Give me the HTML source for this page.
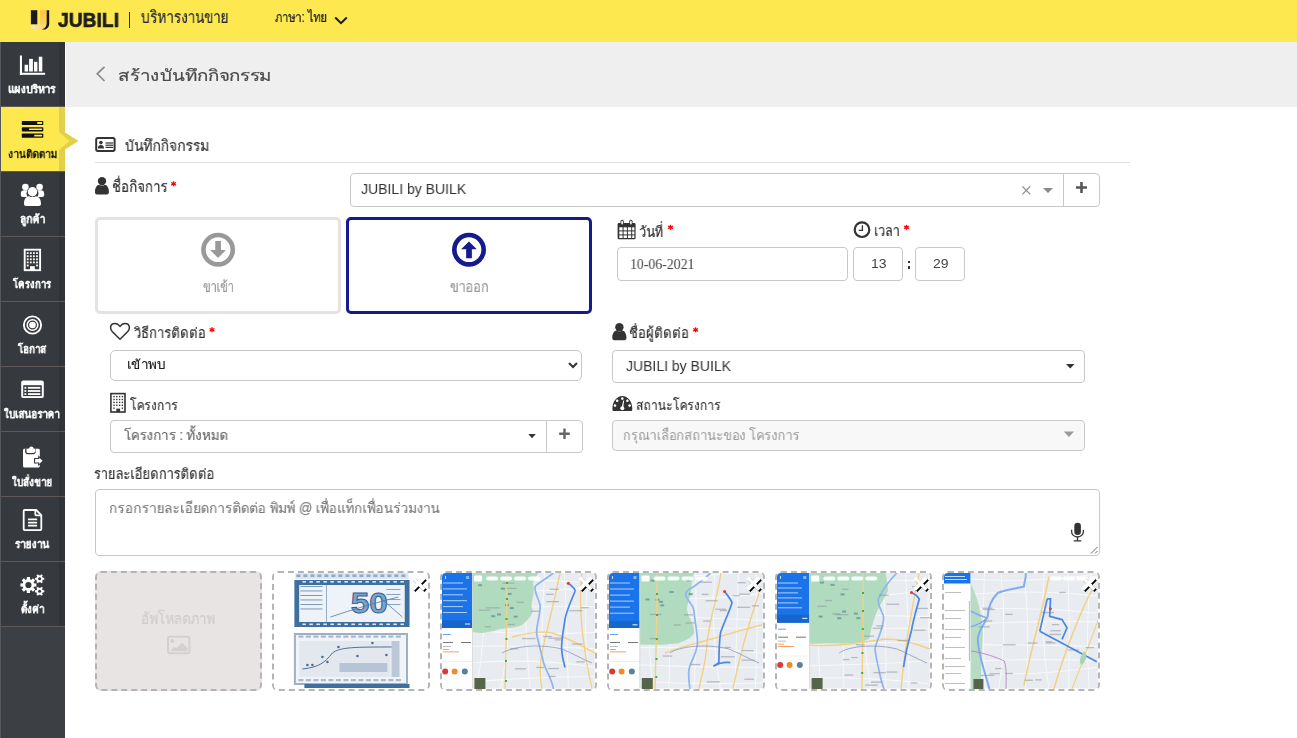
<!DOCTYPE html>
<html><head><meta charset="utf-8">
<style>
*{box-sizing:border-box}
html,body{margin:0;padding:0}
body{width:1297px;height:738px;overflow:hidden;position:relative;background:#fff;font-family:"Liberation Sans",sans-serif;color:#333}
.a{position:absolute}
svg.a{overflow:visible}
.t{position:absolute;white-space:nowrap;line-height:1;transform-origin:0 0;will-change:transform}
.it{position:absolute;left:0;width:65px;height:65px;background:#36393d;border-bottom:1px solid #5f5859}
.strip{position:absolute;left:59px;top:0;width:6px;height:64px;background:#303337}
.box{position:absolute;border:1px solid #c9c9c9;border-radius:4px;background:#fff}
.req{position:absolute}
.img{position:absolute;border:2px dashed #b5b5b5;border-radius:6px;overflow:hidden;background:#fff}
</style></head>
<body>
<!-- HEADER -->
<div class="a" style="left:0;top:0;width:1297px;height:42px;background:#fde94f"></div>
<svg class="a" style="left:27px;top:7px" width="26" height="26" viewBox="0 0 26 26">
  <defs>
    <linearGradient id="ugb" x1="0" y1="0" x2="1" y2="0"><stop offset="0" stop-color="#fdeba6"/><stop offset="1" stop-color="#f9d45a"/></linearGradient>
    <linearGradient id="ugg" x1="0" y1="0" x2="0" y2="1"><stop offset="0" stop-color="#f8c63c"/><stop offset="1" stop-color="#fad35a"/></linearGradient>
  </defs>
  <path d="M3.9 17.1H22.2V16.5C22.2 20 20 22.6 16.5 22.6H7.2C5.3 22.6 3.9 21.3 3.9 19.4Z" fill="url(#ugb)"/>
  <rect x="13" y="3.2" width="6.9" height="14.2" fill="url(#ugg)"/>
  <rect x="3.9" y="3.2" width="6.4" height="14.1" fill="#1c1c1c"/>
  <path d="M19.7 3.2H22.2V16.5C22.2 20 20 22.6 16.5 22.6H14C17.6 22 19.7 19.6 19.7 16Z" fill="#151515"/>
</svg>
<div class="t" style="left:58.20px;top:8.94px;font-size:21.00px;color:#1e1e1e;transform:scaleX(0.9167);font-weight:bold;-webkit-text-stroke:0.7px #1e1e1e;">JUBILI</div>
<div class="a" style="left:128.6px;top:12px;width:1.6px;height:16px;background:#2a2a2a"></div>
<div class="t" style="left:140.60px;top:9.59px;font-size:16.64px;color:#2a2c36;transform:scaleX(0.8198);-webkit-text-stroke:0.20px #2a2c36;">บริหารงานขาย</div>
<div class="t" style="left:274.90px;top:10.49px;font-size:14.31px;color:#1a1a1a;transform:scaleX(0.7818);-webkit-text-stroke:0.20px #1a1a1a;">ภาษา: ไทย</div>
<svg class="a" style="left:334px;top:16px" width="14" height="9" viewBox="0 0 14 9"><path d="M1.2 1.5L7 7.2 12.8 1.5" fill="none" stroke="#1a1a1a" stroke-width="2"/></svg>

<!-- SIDEBAR -->
<div class="a" style="left:0;top:42px;width:65px;height:696px;background:#3c3f43"></div>
<div class="a" style="left:0;top:42px;width:1px;height:696px;background:#5a5d61"></div>
<div class="it" style="top:42px"><div class="strip"></div></div>
<div class="a" style="left:0;top:107px;width:65px;height:64px;background:#fde94f"></div>
<div class="a" style="left:59px;top:107px;width:6px;height:64px;background:#e2d04b"></div>
<div class="a" style="left:0;top:171px;width:65px;height:1px;background:#5f5859"></div>
<svg class="a" style="left:59px;top:128px" width="20" height="26" viewBox="0 0 20 26"><path d="M0 0.7L19.6 13 0 25.3z" fill="#e2d04b"/><path d="M0 4L10.4 13 0 22z" fill="#fde94f"/></svg>
<div class="it" style="top:172px"><div class="strip"></div></div>
<div class="it" style="top:237px"><div class="strip"></div></div>
<div class="it" style="top:302px"><div class="strip"></div></div>
<div class="it" style="top:367px"><div class="strip"></div></div>
<div class="it" style="top:432px"><div class="strip"></div></div>
<div class="it" style="top:497px"><div class="strip"></div></div>
<div class="it" style="top:562px"><div class="strip"></div></div>
<div class="a" style="left:0;top:42px;width:1px;height:696px;background:#55585c"></div>

<!-- sidebar icons -->
<svg class="a" style="left:0;top:0" width="65" height="738" viewBox="0 0 65 738">
  <!-- chart -->
  <g fill="#fff">
    <rect x="19.9" y="55.5" width="2.1" height="19.3"/><rect x="19.9" y="72.8" width="25.2" height="2"/>
    <rect x="24.6" y="64.8" width="3.5" height="6.7"/><rect x="29.1" y="58.9" width="3.8" height="12.6"/>
    <rect x="34" y="61.8" width="3.4" height="9.7"/><rect x="38.8" y="56.7" width="3.5" height="14.8"/>
  </g>
  <!-- tasks (active) -->
  <g fill="#111">
    <rect x="21.8" y="120.9" width="21.5" height="4.2" rx="0.9"/>
    <rect x="21.8" y="127.2" width="21.5" height="4.3" rx="0.9"/>
    <rect x="21.8" y="133.4" width="21.5" height="4.4" rx="0.9"/>
  </g>
  <g fill="#fde94f">
    <rect x="37.2" y="122.1" width="4.9" height="1.9" rx="0.5"/>
    <rect x="29" y="128.4" width="13.1" height="1.7" rx="0.5"/>
    <rect x="34.2" y="134.8" width="7.9" height="1.7" rx="0.5"/>
  </g>
  <!-- users -->
  <g fill="#fff">
    <circle cx="25.4" cy="187.1" r="3.3"/><circle cx="39.6" cy="187.1" r="3.3"/>
    <path d="M20.8 193.5c0-2.2 1.4-3.3 3.4-3.3h3.5c-0.8 1-1.2 2.2-1.2 3.4 0 1.3 0.4 2.4 1.1 3.3h-4.8c-1.2 0-2-0.8-2-2z"/>
    <path d="M44.2 193.5c0-2.2-1.4-3.3-3.4-3.3h-3.5c0.8 1 1.2 2.2 1.2 3.4 0 1.3-0.4 2.4-1.1 3.3h4.8c1.2 0 2-0.8 2-2z"/>
    <circle cx="32.5" cy="191.8" r="4.7"/>
    <path d="M24 203.5c0-4.3 2.2-7.3 5.2-7.3 1 0.6 2.1 0.9 3.3 0.9s2.3-0.3 3.3-0.9c3 0 5.2 3 5.2 7.3v0.6c0 1.1-0.9 2-2 2h-13c-1.1 0-2-0.9-2-2z"/>
  </g>
  <!-- building -->
  <rect x="24.7" y="249.7" width="15.4" height="20.5" fill="none" stroke="#fff" stroke-width="1.9"/>
  <g fill="#fff">
    <rect x="26.8" y="252.2" width="1.8" height="1.8"/><rect x="29.9" y="252.2" width="1.8" height="1.8"/><rect x="33" y="252.2" width="1.8" height="1.8"/><rect x="36.1" y="252.2" width="1.8" height="1.8"/>
    <rect x="26.8" y="255.3" width="1.8" height="1.8"/><rect x="29.9" y="255.3" width="1.8" height="1.8"/><rect x="33" y="255.3" width="1.8" height="1.8"/><rect x="36.1" y="255.3" width="1.8" height="1.8"/>
    <rect x="26.8" y="258.4" width="1.8" height="1.8"/><rect x="29.9" y="258.4" width="1.8" height="1.8"/><rect x="33" y="258.4" width="1.8" height="1.8"/><rect x="36.1" y="258.4" width="1.8" height="1.8"/>
    <rect x="26.8" y="261.5" width="1.8" height="1.8"/><rect x="29.9" y="261.5" width="1.8" height="1.8"/><rect x="33" y="261.5" width="1.8" height="1.8"/><rect x="36.1" y="261.5" width="1.8" height="1.8"/>
    <rect x="26.8" y="264.6" width="1.8" height="1.8"/><rect x="36.1" y="264.6" width="1.8" height="1.8"/>
    <rect x="30" y="266.2" width="4.8" height="4"/>
  </g>
  <!-- target -->
  <circle cx="32.5" cy="325" r="8.6" fill="none" stroke="#fff" stroke-width="1.9"/>
  <circle cx="32.5" cy="325" r="5.3" fill="none" stroke="#fff" stroke-width="1.6"/>
  <circle cx="32.5" cy="325" r="3.3" fill="#fff"/>
  <!-- quotation list -->
  <rect x="21.2" y="380.4" width="22.6" height="17.7" rx="2.2" fill="#fff"/>
  <rect x="23.2" y="385.2" width="18.6" height="10.9" fill="#36393d"/>
  <g fill="#fff">
    <rect x="24.4" y="386.9" width="1.9" height="1.8"/><rect x="24.4" y="390.1" width="1.9" height="1.8"/><rect x="24.4" y="393.2" width="1.9" height="1.8"/>
    <rect x="27.9" y="386.9" width="12.4" height="1.8"/><rect x="27.9" y="390.1" width="12.4" height="1.8"/><rect x="27.9" y="393.2" width="12.4" height="1.8"/>
  </g>
  <!-- clipboard -->
  <path d="M24.5 448.8h13.8c0.8 0 1.5 0.7 1.5 1.5v15.7c0 0.8-0.7 1.5-1.5 1.5h-13.8c-0.8 0-1.5-0.7-1.5-1.5v-15.7c0-0.8 0.7-1.5 1.5-1.5z" fill="#fff"/>
  <path d="M25.8 448.6v2.6c0 1.4 1 2.5 2.3 2.5h4.7c1.3 0 2.3-1.1 2.3-2.5v-2.6" fill="none" stroke="#36393d" stroke-width="1.3"/>
  <path d="M27.5 448.7h1.8c0-1.2 0.8-2.1 2.1-2.1s2.1 0.9 2.1 2.1h1.8v2.5c0 0.6-0.4 1-1 1h-5.8c-0.6 0-1-0.4-1-1z" fill="#fff"/>
  <path d="M34 458h4.2v-2.7l5.6 5.5-5.6 5.5v-2.7H34z" fill="#36393d"/>
  <path d="M35.1 459.1h4.2v-1.4l3.3 3.1-3.3 3.1v-1.4h-4.2z" fill="#fff"/>
  <!-- document -->
  <path d="M24.6 510h11.6l5.1 5.1v14.2c0 0.6-0.4 0.9-0.9 0.9H24.6c-0.5 0-0.9-0.4-0.9-0.9V510.9c0-0.5 0.4-0.9 0.9-0.9z" fill="none" stroke="#fff" stroke-width="1.8" stroke-linejoin="round"/>
  <path d="M35.3 510v4.3c0 0.6 0.4 1 1 1h4.8" fill="none" stroke="#fff" stroke-width="1.7"/>
  <g fill="#fff"><rect x="27.9" y="518.6" width="9.2" height="1.7" rx="0.5"/><rect x="27.9" y="521.8" width="9.2" height="1.7" rx="0.5"/><rect x="27.9" y="524.8" width="9.2" height="1.7" rx="0.5"/></g>
  <!-- gears -->
  <g fill="#fff">
    <circle cx="28.4" cy="585" r="5.9"/>
    <g transform="translate(28.4 585)">
      <rect x="-1.6" y="-8" width="3.2" height="16"/>
      <rect x="-1.6" y="-8" width="3.2" height="16" transform="rotate(45)"/>
      <rect x="-1.6" y="-8" width="3.2" height="16" transform="rotate(90)"/>
      <rect x="-1.6" y="-8" width="3.2" height="16" transform="rotate(135)"/>
    </g>
    <g transform="translate(39.6 578.8) rotate(30)">
      <circle r="3.3"/>
      <rect x="-1" y="-4.7" width="2" height="9.4"/><rect x="-1" y="-4.7" width="2" height="9.4" transform="rotate(60)"/><rect x="-1" y="-4.7" width="2" height="9.4" transform="rotate(120)"/>
    </g>
    <g transform="translate(39.6 591.3) rotate(30)">
      <circle r="3.3"/>
      <rect x="-1" y="-4.7" width="2" height="9.4"/><rect x="-1" y="-4.7" width="2" height="9.4" transform="rotate(60)"/><rect x="-1" y="-4.7" width="2" height="9.4" transform="rotate(120)"/>
    </g>
  </g>
  <circle cx="28.4" cy="585" r="3.1" fill="#36393d"/>
  <circle cx="39.6" cy="578.8" r="1.5" fill="#36393d"/>
  <circle cx="39.6" cy="591.3" r="1.5" fill="#36393d"/>
</svg>
<div class="t" style="left:8.39px;top:83.86px;font-size:11.29px;color:#fff;transform:scaleX(0.9137);font-weight:bold;-webkit-text-stroke:0.15px #fff;">แผงบริหาร</div><div class="t" style="left:8.00px;top:148.86px;font-size:11.29px;color:#111;transform:scaleX(0.9056);font-weight:bold;-webkit-text-stroke:0.00px #111;">งานติดตาม</div><div class="t" style="left:20.00px;top:213.86px;font-size:11.29px;color:#fff;transform:scaleX(0.8964);font-weight:bold;-webkit-text-stroke:0.15px #fff;">ลูกค้า</div><div class="t" style="left:13.30px;top:278.86px;font-size:11.29px;color:#fff;transform:scaleX(0.8467);font-weight:bold;-webkit-text-stroke:0.15px #fff;">โครงการ</div><div class="t" style="left:18.30px;top:343.86px;font-size:11.29px;color:#fff;transform:scaleX(0.8576);font-weight:bold;-webkit-text-stroke:0.15px #fff;">โอกาส</div><div class="t" style="left:4.30px;top:408.86px;font-size:11.29px;color:#fff;transform:scaleX(0.8554);font-weight:bold;-webkit-text-stroke:0.15px #fff;">ใบเสนอราคา</div><div class="t" style="left:12.30px;top:476.56px;font-size:11.29px;color:#fff;transform:scaleX(0.8609);font-weight:bold;-webkit-text-stroke:0.15px #fff;">ใบสั่งขาย</div><div class="t" style="left:15.00px;top:538.86px;font-size:11.29px;color:#fff;transform:scaleX(0.8821);font-weight:bold;-webkit-text-stroke:0.15px #fff;">รายงาน</div><div class="t" style="left:20.80px;top:603.86px;font-size:11.29px;color:#fff;transform:scaleX(0.8630);font-weight:bold;-webkit-text-stroke:0.15px #fff;">ตั้งค่า</div>

<!-- TITLE BAND -->
<div class="a" style="left:66px;top:42px;width:1231px;height:65px;background:#efefef"></div>
<svg class="a" style="left:95px;top:66px" width="11" height="16" viewBox="0 0 11 16"><path d="M9.5 0.8L2.2 7.8l7.3 7.2" fill="none" stroke="#8a8a8a" stroke-width="1.7"/></svg>
<div class="t" style="left:118.20px;top:68.11px;font-size:15.69px;color:#4a4a4a;transform:scaleX(1.1968);-webkit-text-stroke:0.20px #4a4a4a;">สร้างบันทึกกิจกรรม</div>

<!-- FORM -->
<!-- section header -->
<svg class="a" style="left:0;top:0" width="1297" height="738" viewBox="0 0 1297 738">
  <!-- id card -->
  <rect x="96.2" y="138" width="18.4" height="12.9" rx="1.6" fill="none" stroke="#333" stroke-width="2"/>
  <circle cx="100.9" cy="142.6" r="1.8" fill="#333"/>
  <path d="M97.8 148.6c0-2.3 1.1-3.5 3.1-3.5s3.1 1.2 3.1 3.5z" fill="#333"/>
  <rect x="105.5" y="142.4" width="7.5" height="1.2" fill="#333"/><rect x="105.5" y="144.6" width="7.5" height="1.2" fill="#333"/><rect x="105.5" y="146.8" width="7.5" height="1.2" fill="#333"/>
  <!-- hr -->
  <rect x="95" y="162" width="1035" height="1" fill="#dedede"/>
  <!-- user icon -->
  <circle cx="102" cy="181.1" r="4.2" fill="#333"/>
  <path d="M95 191.5c0-4 2.2-6.8 4.3-6.8 0.8 0.6 1.7 0.9 2.7 0.9s1.9-0.3 2.7-0.9c2.1 0 4.2 2.8 4.2 6.8v1c0 1-0.8 1.9-1.8 1.9H96.8c-1 0-1.8-0.9-1.8-1.9z" fill="#333"/>
  <!-- asterisk name -->
  <g fill="none" stroke="#f00" stroke-width="1.4">
    <path d="M173.6 181.3v5"/><path d="M171.2 182.5l4.8 2.6"/><path d="M176 182.5l-4.8 2.6"/>
  </g>
</svg>

<div class="t" style="left:124.60px;top:137.75px;font-size:15.17px;color:#333;transform:scaleX(0.9165);-webkit-text-stroke:0.20px #333;">บันทึกกิจกรรม</div><div class="t" style="left:111.58px;top:179.16px;font-size:15.86px;color:#333;transform:scaleX(0.8227);-webkit-text-stroke:0.20px #333;">ชื่อกิจการ</div>
<!-- select name -->
<div class="box" style="left:350px;top:173px;width:750px;height:34px;border-color:#c8c8c8"></div>
<div class="a" style="left:1063px;top:173px;width:1px;height:34px;background:#c8c8c8"></div>
<div class="t" style="left:360.80px;top:182.31px;font-size:14.93px;color:#333;transform:scaleX(0.9393);">JUBILI by BUILK</div>
<svg class="a" style="left:0;top:0" width="1297" height="738" viewBox="0 0 1297 738">
  <path d="M1022.4 186.4l7.8 8M1030.2 186.4l-7.8 8" stroke="#8a8a8a" stroke-width="1.3" fill="none"/>
  <path d="M1043 188h10l-5 5z" fill="#8a8a8a"/>
  <path d="M1081.5 182v11M1076 187.5h11" stroke="#555" stroke-width="2.6" fill="none"/>
</svg>

<!-- direction buttons -->
<div class="a" style="left:95px;top:217px;width:246px;height:97px;border:3px solid #e6e2e2;border-radius:5px"></div>
<div class="a" style="left:346px;top:217px;width:246px;height:97px;border:3px solid #151a8c;border-radius:5px"></div>
<svg class="a" style="left:0;top:0" width="1297" height="738" viewBox="0 0 1297 738">
  <circle cx="218.1" cy="249.7" r="14.7" fill="none" stroke="#999" stroke-width="4.6"/>
  <path d="M215.25 241.1h5.7v9h4.95l-7.85 7.9-7.85-7.9h5.05z" fill="#999"/>
  <circle cx="469" cy="249.7" r="14.7" fill="none" stroke="#151a8c" stroke-width="4.6"/>
  <path d="M466.15 258.3h5.7v-9h4.95l-7.85-7.9-7.85 7.9h5.05z" fill="#151a8c"/>
</svg>
<div class="t" style="left:202.90px;top:278.90px;font-size:15.00px;color:#999;transform:scaleX(0.7525);-webkit-text-stroke:0.20px #999;">ขาเข้า</div><div class="t" style="left:450.00px;top:278.90px;font-size:15.00px;color:#999;transform:scaleX(0.8591);-webkit-text-stroke:0.20px #999;">ขาออก</div>

<!-- date / time -->
<svg class="a" style="left:0;top:0" width="1297" height="738" viewBox="0 0 1297 738">
  <!-- calendar -->
  <rect x="617.6" y="223" width="18" height="16.3" rx="1.4" fill="#333"/>
  <g fill="#fff">
    <rect x="619.3" y="227.3" width="3.3" height="3.1"/><rect x="623.6" y="227.3" width="3.3" height="3.1"/><rect x="627.9" y="227.3" width="3.3" height="3.1"/><rect x="632.2" y="227.3" width="2.2" height="3.1"/>
    <rect x="619.3" y="231.4" width="3.3" height="3"/><rect x="623.6" y="231.4" width="3.3" height="3"/><rect x="627.9" y="231.4" width="3.3" height="3"/><rect x="632.2" y="231.4" width="2.2" height="3"/>
    <rect x="619.3" y="235.4" width="3.3" height="2.6"/><rect x="623.6" y="235.4" width="3.3" height="2.6"/><rect x="627.9" y="235.4" width="3.3" height="2.6"/><rect x="632.2" y="235.4" width="2.2" height="2.6"/>
  </g>
  <rect x="620.5" y="219.8" width="3.2" height="5.6" rx="1.5" fill="#333"/><rect x="629.3" y="219.8" width="3.2" height="5.6" rx="1.5" fill="#333"/>
  <rect x="621.3" y="220.8" width="1.6" height="3.8" rx="0.8" fill="#fff"/><rect x="630.1" y="220.8" width="1.6" height="3.8" rx="0.8" fill="#fff"/>
  <!-- clock -->
  <circle cx="862" cy="229.7" r="7.3" fill="none" stroke="#333" stroke-width="2.2"/>
  <path d="M862.4 225.2v5.2h-3.6" fill="none" stroke="#333" stroke-width="1.3"/>
  <!-- asterisks -->
  <g fill="none" stroke="#f00" stroke-width="1.4">
    <path d="M670.5 224.8v5"/><path d="M668.1 226l4.8 2.6"/><path d="M672.9 226l-4.8 2.6"/>
    <path d="M906.5 224.8v5"/><path d="M904.1 226l4.8 2.6"/><path d="M908.9 226l-4.8 2.6"/>
  </g>
</svg>
<div class="t" style="left:638.97px;top:223.70px;font-size:15.34px;color:#333;transform:scaleX(0.8286);-webkit-text-stroke:0.20px #333;">วันที่</div><div class="t" style="left:874.14px;top:224.44px;font-size:14.48px;color:#333;transform:scaleX(0.8571);-webkit-text-stroke:0.20px #333;">เวลา</div>
<div class="box" style="left:617px;top:247px;width:231px;height:34px;border-color:#c8c8c8"></div>
<div class="box" style="left:853px;top:247px;width:50px;height:34px;border-color:#c8c8c8"></div>
<div class="box" style="left:915px;top:247px;width:50px;height:34px;border-color:#c8c8c8"></div>
<div class="a" style="left:907.9px;top:260.6px;width:2.6px;height:2.6px;background:#333"></div>
<div class="a" style="left:907.9px;top:266.4px;width:2.6px;height:2.6px;background:#333"></div>
<div class="t" style="left:630.36px;top:256.50px;font-size:14.71px;color:#444;transform:scaleX(0.9388);font-family:'Liberation Serif';">10-06-2021</div><div class="t" style="left:870.67px;top:257.25px;font-size:13.66px;color:#444;transform:scaleX(1.0286);">13</div><div class="t" style="left:932.80px;top:257.25px;font-size:13.66px;color:#444;transform:scaleX(1.0200);">29</div>

<!-- method / contact -->
<svg class="a" style="left:0;top:0" width="1297" height="738" viewBox="0 0 1297 738">
  <!-- heart -->
  <path d="M120 339.2l-7.6-7.4c-1.4-1.4-1.8-2.6-1.8-4 0-2.6 2-4.2 4.6-4.2 1.9 0 3.6 1.2 4.8 2.8 1.2-1.6 2.9-2.8 4.8-2.8 2.6 0 4.6 1.6 4.6 4.2 0 1.4-0.4 2.6-1.8 4z" fill="none" stroke="#333" stroke-width="1.5" stroke-linejoin="round"/>
  <!-- user2 -->
  <circle cx="619.4" cy="327.3" r="4.2" fill="#333"/>
  <path d="M612.3 337.3c0-4 2.2-6.8 4.3-6.8 0.8 0.6 1.7 0.9 2.8 0.9s2-0.3 2.8-0.9c2.1 0 4.2 2.8 4.2 6.8v1c0 1-0.8 1.9-1.8 1.9h-10.5c-1 0-1.8-0.9-1.8-1.9z" fill="#333"/>
  <g fill="none" stroke="#f00" stroke-width="1.4">
    <path d="M212 327.3v5"/><path d="M209.6 328.5l4.8 2.6"/><path d="M214.4 328.5l-4.8 2.6"/>
    <path d="M695.6 327.3v5"/><path d="M693.2 328.5l4.8 2.6"/><path d="M698 328.5l-4.8 2.6"/>
  </g>
</svg>
<div class="t" style="left:133.90px;top:325.90px;font-size:14.66px;color:#333;transform:scaleX(0.8875);-webkit-text-stroke:0.20px #333;">วิธีการติดต่อ</div><div class="t" style="left:629.10px;top:325.90px;font-size:14.66px;color:#333;transform:scaleX(0.8969);-webkit-text-stroke:0.20px #333;">ชื่อผู้ติดต่อ</div>
<div class="box" style="left:110px;top:349.5px;width:472px;height:31px;border-color:#c8c8c8;border-radius:5px"></div>
<svg class="a" style="left:568px;top:362px" width="10" height="7" viewBox="0 0 10 7"><path d="M1 1l4 4 4-4" fill="none" stroke="#333" stroke-width="2"/></svg>
<div class="t" style="left:126.63px;top:358.98px;font-size:12.59px;color:#222;transform:scaleX(1.0706);-webkit-text-stroke:0.15px #222;">เข้าพบ</div>
<div class="box" style="left:612px;top:349.5px;width:472.5px;height:33px;border-color:#c8c8c8"></div>
<svg class="a" style="left:1065.5px;top:363.5px" width="9" height="5" viewBox="0 0 9 5"><path d="M0 0h8.5L4.25 4.6z" fill="#333"/></svg>
<div class="t" style="left:625.50px;top:358.68px;font-size:14.49px;color:#333;transform:scaleX(0.9661);">JUBILI by BUILK</div>

<!-- project / status -->
<svg class="a" style="left:0;top:0" width="1297" height="738" viewBox="0 0 1297 738">
  <!-- building -->
  <rect x="110.9" y="393.6" width="14.1" height="18.4" fill="none" stroke="#333" stroke-width="1.6"/>
  <g fill="#333">
    <rect x="113.3" y="395.9" width="1.4" height="1.4"/><rect x="116.1" y="395.9" width="1.4" height="1.4"/><rect x="118.9" y="395.9" width="1.4" height="1.4"/><rect x="121.7" y="395.9" width="1.4" height="1.4"/>
    <rect x="113.3" y="398.8" width="1.4" height="1.4"/><rect x="116.1" y="398.8" width="1.4" height="1.4"/><rect x="118.9" y="398.8" width="1.4" height="1.4"/><rect x="121.7" y="398.8" width="1.4" height="1.4"/>
    <rect x="113.3" y="401.7" width="1.4" height="1.4"/><rect x="116.1" y="401.7" width="1.4" height="1.4"/><rect x="118.9" y="401.7" width="1.4" height="1.4"/><rect x="121.7" y="401.7" width="1.4" height="1.4"/>
    <rect x="113.3" y="404.6" width="1.4" height="1.4"/><rect x="116.1" y="404.6" width="1.4" height="1.4"/><rect x="118.9" y="404.6" width="1.4" height="1.4"/><rect x="121.7" y="404.6" width="1.4" height="1.4"/>
    <rect x="113.3" y="407.5" width="1.4" height="1.4"/><rect x="121.7" y="407.5" width="1.4" height="1.4"/>
    <rect x="116.3" y="408.6" width="3.8" height="3.6"/>
  </g>
  <!-- speedometer -->
  <path d="M612.4 408.6c0-7 4.4-12.7 9.95-12.7s9.95 5.7 9.95 12.7c0 1.3-0.2 2.5-0.6 2.5h-18.7c-0.4 0-0.6-1.2-0.6-2.5z" fill="#333"/>
  <g fill="#fff">
    <circle cx="622.3" cy="398.6" r="1.3"/><circle cx="617.2" cy="400.7" r="1.3"/><circle cx="627.4" cy="400.7" r="1.3"/>
    <circle cx="615" cy="405.6" r="1.3"/><circle cx="629.6" cy="405.6" r="1.3"/>
    <circle cx="622.3" cy="408.2" r="2"/>
    <path d="M621.6 408l1.6-7.4 0.9 0.2-0.9 7.4z"/>
  </g>
</svg>
<div class="t" style="left:129.50px;top:397.74px;font-size:14.14px;color:#333;transform:scaleX(0.8429);-webkit-text-stroke:0.20px #333;">โครงการ</div><div class="t" style="left:635.66px;top:397.74px;font-size:14.14px;color:#333;transform:scaleX(0.8404);-webkit-text-stroke:0.20px #333;">สถานะโครงการ</div>
<div class="box" style="left:110px;top:419.5px;width:436.5px;height:33px;border-color:#c8c8c8;border-radius:4px 0 0 4px"></div>
<div class="box" style="left:546px;top:419.5px;width:36.5px;height:33px;border-color:#c8c8c8;border-radius:0 4px 4px 0"></div>
<svg class="a" style="left:0;top:0" width="1297" height="738" viewBox="0 0 1297 738">
  <path d="M528.3 434h7.5l-3.75 4.2z" fill="#333"/>
  <path d="M564.5 428.5v10.4M559.2 433.7h10.6" stroke="#666" stroke-width="2.4" fill="none"/>
</svg>
<div class="t" style="left:124.00px;top:429.14px;font-size:13.79px;color:#666;transform:scaleX(0.9745);-webkit-text-stroke:0.15px #666;">โครงการ : ทั้งหมด</div>
<div class="box" style="left:612px;top:419.5px;width:472.5px;height:31.5px;border-color:#c8c8c8;background:#f8f8f8"></div>
<svg class="a" style="left:0;top:0" width="1297" height="738" viewBox="0 0 1297 738">
  <path d="M1063.8 431.5h10.2l-5.1 5.5z" fill="#999"/>
</svg>
<div class="t" style="left:622.71px;top:427.84px;font-size:14.14px;color:#a0a0a0;transform:scaleX(0.8883);-webkit-text-stroke:0.15px #a0a0a0;">กรุณาเลือกสถานะของ โครงการ</div>

<!-- detail -->
<div class="t" style="left:94.33px;top:467.40px;font-size:14.66px;color:#333;transform:scaleX(0.8657);-webkit-text-stroke:0.20px #333;">รายละเอียดการติดต่อ</div>
<div class="box" style="left:95px;top:489px;width:1005px;height:67px;border-color:#c8c8c8"></div>
<div class="t" style="left:109.46px;top:500.59px;font-size:14.31px;color:#7a7a7a;transform:scaleX(0.9351);-webkit-text-stroke:0.15px #7a7a7a;">กรอกรายละเอียดการติดต่อ พิมพ์ @ เพื่อแท็กเพื่อนร่วมงาน</div>
<svg class="a" style="left:0;top:0" width="1297" height="738" viewBox="0 0 1297 738">
  <rect x="1074.3" y="522.7" width="6.6" height="12.3" rx="3.3" fill="#333"/>
  <path d="M1071.6 529.8v1.6c0 3.2 2.6 5.6 5.9 5.6s5.9-2.4 5.9-5.6v-1.6" fill="none" stroke="#333" stroke-width="1.3"/>
  <path d="M1077.5 537v3.6M1073.7 540.9h7.6" stroke="#333" stroke-width="1.3" fill="none"/>
  <path d="M1091 553.5l6.5-6.5M1095 553.5l2.5-2.5" stroke="#555" stroke-width="0.9" fill="none"/>
</svg>

<!-- images -->
<div class="img" style="left:95px;top:571px;width:167px;height:119.5px;background:#e8e4e4;border-color:#b3b3b3"></div>
<div class="t" style="left:141.06px;top:611.46px;font-size:15.86px;color:#d0cccc;transform:scaleX(0.8402);-webkit-text-stroke:0.15px #d0cccc;">อัพโหลดภาพ</div>
<svg class="a" style="left:0;top:0" width="1297" height="738" viewBox="0 0 1297 738">
  <rect x="168" y="636.7" width="21.4" height="16.5" rx="1.4" fill="none" stroke="#d3d0d0" stroke-width="2"/>
  <circle cx="172.3" cy="641" r="2" fill="#d3d0d0"/>
  <path d="M170 651.2l4.3-4.5 2 1.9 5.6-6.1 5.5 5.4v3.3z" fill="#d3d0d0"/>
</svg>

<div class="img" style="left:272.0px;top:571px;width:158.0px;height:119.5px"><svg width="154" height="115" viewBox="0 0 154 115" style="position:absolute;left:0;top:0;display:block"><rect width="154" height="115" fill="#fff"/><rect x="21.4" y="0" width="113.1" height="6" fill="#dde6f0"/><rect x="22.4" y="1.5" width="4" height="2.5" fill="#5c7fa6" opacity="0.6"/><rect x="29.4" y="1.5" width="4" height="2.5" fill="#5c7fa6" opacity="0.6"/><rect x="36.4" y="1.5" width="4" height="2.5" fill="#5c7fa6" opacity="0.6"/><rect x="43.4" y="1.5" width="4" height="2.5" fill="#5c7fa6" opacity="0.6"/><rect x="50.4" y="1.5" width="4" height="2.5" fill="#5c7fa6" opacity="0.6"/><rect x="57.4" y="1.5" width="4" height="2.5" fill="#5c7fa6" opacity="0.6"/><rect x="64.4" y="1.5" width="4" height="2.5" fill="#5c7fa6" opacity="0.6"/><rect x="71.4" y="1.5" width="4" height="2.5" fill="#5c7fa6" opacity="0.6"/><rect x="78.4" y="1.5" width="4" height="2.5" fill="#5c7fa6" opacity="0.6"/><rect x="85.4" y="1.5" width="4" height="2.5" fill="#5c7fa6" opacity="0.6"/><rect x="92.4" y="1.5" width="4" height="2.5" fill="#5c7fa6" opacity="0.6"/><rect x="99.4" y="1.5" width="4" height="2.5" fill="#5c7fa6" opacity="0.6"/><rect x="106.4" y="1.5" width="4" height="2.5" fill="#5c7fa6" opacity="0.6"/><rect x="113.4" y="1.5" width="4" height="2.5" fill="#5c7fa6" opacity="0.6"/><rect x="120.4" y="1.5" width="4" height="2.5" fill="#5c7fa6" opacity="0.6"/><rect x="127.4" y="1.5" width="4" height="2.5" fill="#5c7fa6" opacity="0.6"/><rect x="20.4" y="7" width="115.1" height="47" fill="#e6eef6"/><rect x="22.9" y="9.5" width="110.1" height="42" fill="none" stroke="#3f6f9f" stroke-width="5"/><rect x="25.4" y="12" width="105.1" height="37" fill="#eef3f9"/><rect x="28.4" y="8" width="3.5" height="1.6" fill="#dfe8f2"/><rect x="28.4" y="50.5" width="3.5" height="1.6" fill="#dfe8f2"/><rect x="35.4" y="8" width="3.5" height="1.6" fill="#dfe8f2"/><rect x="35.4" y="50.5" width="3.5" height="1.6" fill="#dfe8f2"/><rect x="42.4" y="8" width="3.5" height="1.6" fill="#dfe8f2"/><rect x="42.4" y="50.5" width="3.5" height="1.6" fill="#dfe8f2"/><rect x="49.4" y="8" width="3.5" height="1.6" fill="#dfe8f2"/><rect x="49.4" y="50.5" width="3.5" height="1.6" fill="#dfe8f2"/><rect x="56.4" y="8" width="3.5" height="1.6" fill="#dfe8f2"/><rect x="56.4" y="50.5" width="3.5" height="1.6" fill="#dfe8f2"/><rect x="63.4" y="8" width="3.5" height="1.6" fill="#dfe8f2"/><rect x="63.4" y="50.5" width="3.5" height="1.6" fill="#dfe8f2"/><rect x="70.4" y="8" width="3.5" height="1.6" fill="#dfe8f2"/><rect x="70.4" y="50.5" width="3.5" height="1.6" fill="#dfe8f2"/><rect x="77.4" y="8" width="3.5" height="1.6" fill="#dfe8f2"/><rect x="77.4" y="50.5" width="3.5" height="1.6" fill="#dfe8f2"/><rect x="84.4" y="8" width="3.5" height="1.6" fill="#dfe8f2"/><rect x="84.4" y="50.5" width="3.5" height="1.6" fill="#dfe8f2"/><rect x="91.4" y="8" width="3.5" height="1.6" fill="#dfe8f2"/><rect x="91.4" y="50.5" width="3.5" height="1.6" fill="#dfe8f2"/><rect x="98.4" y="8" width="3.5" height="1.6" fill="#dfe8f2"/><rect x="98.4" y="50.5" width="3.5" height="1.6" fill="#dfe8f2"/><rect x="105.4" y="8" width="3.5" height="1.6" fill="#dfe8f2"/><rect x="105.4" y="50.5" width="3.5" height="1.6" fill="#dfe8f2"/><rect x="112.4" y="8" width="3.5" height="1.6" fill="#dfe8f2"/><rect x="112.4" y="50.5" width="3.5" height="1.6" fill="#dfe8f2"/><rect x="119.4" y="8" width="3.5" height="1.6" fill="#dfe8f2"/><rect x="119.4" y="50.5" width="3.5" height="1.6" fill="#dfe8f2"/><rect x="126.4" y="8" width="3.5" height="1.6" fill="#dfe8f2"/><rect x="126.4" y="50.5" width="3.5" height="1.6" fill="#dfe8f2"/><rect x="52.4" y="12" width="0.6" height="37" fill="#5a80a8"/><rect x="26.4" y="13.0" width="22" height="0.9" fill="#6f8fb0"/><rect x="26.4" y="17.5" width="22" height="0.9" fill="#6f8fb0"/><rect x="26.4" y="22.0" width="22" height="0.9" fill="#6f8fb0"/><rect x="26.4" y="26.5" width="22" height="0.9" fill="#6f8fb0"/><rect x="26.4" y="31.0" width="22" height="0.9" fill="#6f8fb0"/><rect x="26.4" y="35.5" width="22" height="0.9" fill="#6f8fb0"/><text x="76.7" y="39.5" font-family="Liberation Sans" font-weight="bold" font-size="29" fill="#7ea3c8" stroke="#2f5f8f" stroke-width="0.9" textLength="37" lengthAdjust="spacingAndGlyphs">50</text><path d="M56.4 44 C80.4 36 100.4 30 124.4 24" stroke="#4d79a6" stroke-width="0.8" fill="none"/><path d="M105.4 24 L128.4 44" stroke="#4d79a6" stroke-width="0.8" fill="none"/><rect x="112.4" y="16.0" width="14" height="0.8" fill="#6f8fb0"/><rect x="112.4" y="21.0" width="14" height="0.8" fill="#6f8fb0"/><rect x="112.4" y="26.0" width="14" height="0.8" fill="#6f8fb0"/><rect x="112.4" y="31.0" width="14" height="0.8" fill="#6f8fb0"/><rect x="19.9" y="61" width="114.1" height="50" fill="#f0f3f7"/><rect x="20.9" y="61" width="112.1" height="50" fill="none" stroke="#9eb0c6" stroke-width="2"/><rect x="24.4" y="62.5" width="5" height="2.2" fill="#7d93b0" opacity="0.6"/><rect x="24.4" y="106" width="5" height="2.2" fill="#7d93b0" opacity="0.6"/><rect x="31.9" y="62.5" width="5" height="2.2" fill="#7d93b0" opacity="0.6"/><rect x="31.9" y="106" width="5" height="2.2" fill="#7d93b0" opacity="0.6"/><rect x="39.4" y="62.5" width="5" height="2.2" fill="#7d93b0" opacity="0.6"/><rect x="39.4" y="106" width="5" height="2.2" fill="#7d93b0" opacity="0.6"/><rect x="46.9" y="62.5" width="5" height="2.2" fill="#7d93b0" opacity="0.6"/><rect x="46.9" y="106" width="5" height="2.2" fill="#7d93b0" opacity="0.6"/><rect x="54.4" y="62.5" width="5" height="2.2" fill="#7d93b0" opacity="0.6"/><rect x="54.4" y="106" width="5" height="2.2" fill="#7d93b0" opacity="0.6"/><rect x="61.9" y="62.5" width="5" height="2.2" fill="#7d93b0" opacity="0.6"/><rect x="61.9" y="106" width="5" height="2.2" fill="#7d93b0" opacity="0.6"/><rect x="69.4" y="62.5" width="5" height="2.2" fill="#7d93b0" opacity="0.6"/><rect x="69.4" y="106" width="5" height="2.2" fill="#7d93b0" opacity="0.6"/><rect x="76.9" y="62.5" width="5" height="2.2" fill="#7d93b0" opacity="0.6"/><rect x="76.9" y="106" width="5" height="2.2" fill="#7d93b0" opacity="0.6"/><rect x="84.4" y="62.5" width="5" height="2.2" fill="#7d93b0" opacity="0.6"/><rect x="84.4" y="106" width="5" height="2.2" fill="#7d93b0" opacity="0.6"/><rect x="91.9" y="62.5" width="5" height="2.2" fill="#7d93b0" opacity="0.6"/><rect x="91.9" y="106" width="5" height="2.2" fill="#7d93b0" opacity="0.6"/><rect x="99.4" y="62.5" width="5" height="2.2" fill="#7d93b0" opacity="0.6"/><rect x="99.4" y="106" width="5" height="2.2" fill="#7d93b0" opacity="0.6"/><rect x="106.9" y="62.5" width="5" height="2.2" fill="#7d93b0" opacity="0.6"/><rect x="106.9" y="106" width="5" height="2.2" fill="#7d93b0" opacity="0.6"/><rect x="114.4" y="62.5" width="5" height="2.2" fill="#7d93b0" opacity="0.6"/><rect x="114.4" y="106" width="5" height="2.2" fill="#7d93b0" opacity="0.6"/><rect x="121.9" y="62.5" width="5" height="2.2" fill="#7d93b0" opacity="0.6"/><rect x="121.9" y="106" width="5" height="2.2" fill="#7d93b0" opacity="0.6"/><rect x="25.4" y="68" width="91.1" height="36" fill="#e3e8ef"/><path d="M28.4 96 C45.4 94 50.4 90 58.4 80 C66.4 74 80.4 74 120.4 74" stroke="#4f6f99" stroke-width="1" fill="none"/><circle cx="33.4" cy="92" r="1.3" fill="#4a6a9a"/><circle cx="38.4" cy="92" r="1.3" fill="#4a6a9a"/><circle cx="48.4" cy="84" r="1.3" fill="#4a6a9a"/><circle cx="53.4" cy="89" r="1.3" fill="#4a6a9a"/><circle cx="64.4" cy="74" r="1.3" fill="#4a6a9a"/><circle cx="83.4" cy="83" r="1.3" fill="#4a6a9a"/><circle cx="98.4" cy="70" r="1.3" fill="#4a6a9a"/><circle cx="112.4" cy="82" r="1.3" fill="#4a6a9a"/><rect x="65.4" y="90" width="48" height="9" fill="#b7c4d6"/><rect x="117.5" y="68" width="8" height="36" fill="#bcc8d8"/><rect x="30.4" y="111" width="105.1" height="5" fill="#3f6f9f"/></svg></div>
<svg class="a" style="left:411.2px;top:576.3px" width="16" height="16" viewBox="0 0 16 16"><path d="M2.3 2.3l11.4 11.4M13.7 2.3l-11.4 11.4" stroke="#000" stroke-width="3.4" transform="translate(0.9 1)"/><path d="M1.8 1.8l11.6 11.6M13.4 1.8l-11.6 11.6" stroke="#fff" stroke-width="3.6"/></svg>
<div class="img" style="left:440.3px;top:571px;width:156.7px;height:119.5px"><svg width="152.7" height="115.5" viewBox="0 0 152.7 115.5" style="position:absolute;left:0;top:0;display:block"><rect width="152.7" height="115.5" fill="#e8ebef"/><path d="M30.1 5.5 Q90 6.0 153 9.8" stroke="#f7f8fa" stroke-width="1.1" fill="none"/><path d="M30.1 21.1 Q90 17.8 153 15.4" stroke="#f7f8fa" stroke-width="1.1" fill="none"/><path d="M30.1 37.7 Q90 31.8 153 33.6" stroke="#f7f8fa" stroke-width="1.1" fill="none"/><path d="M30.1 57.1 Q90 63.0 153 59.4" stroke="#f7f8fa" stroke-width="1.1" fill="none"/><path d="M30.1 73.3 Q90 72.1 153 75.6" stroke="#f7f8fa" stroke-width="1.1" fill="none"/><path d="M30.1 90.0 Q90 84.8 153 94.1" stroke="#f7f8fa" stroke-width="1.1" fill="none"/><path d="M30.1 108.7 Q90 104.0 153 103.5" stroke="#f7f8fa" stroke-width="1.1" fill="none"/><path d="M38.9 0 Q46.2 60 34.1 116" stroke="#f7f8fa" stroke-width="1" fill="none"/><path d="M64.1 0 Q71.6 60 58.5 116" stroke="#f7f8fa" stroke-width="1" fill="none"/><path d="M83.2 0 Q82.8 60 88.2 116" stroke="#f7f8fa" stroke-width="1" fill="none"/><path d="M102.6 0 Q98.7 60 99.6 116" stroke="#f7f8fa" stroke-width="1" fill="none"/><path d="M122.5 0 Q125.3 60 126.3 116" stroke="#f7f8fa" stroke-width="1" fill="none"/><path d="M146.6 0 Q139.2 60 149.2 116" stroke="#f7f8fa" stroke-width="1" fill="none"/><path d="M30 0H96.5C92 6 90 10 91.6 13.5 93 22 88 30 90 35 92 42 86 46 80 52 72 56 62 54 52 58L40 60 30 59Z" fill="#b0dbbf"/><rect x="67.9" y="34.1" width="4" height="2" fill="#5f8f95" opacity="0.75"/><rect x="49.2" y="42.2" width="4" height="2" fill="#5f8f95" opacity="0.75"/><rect x="63.0" y="31.1" width="4" height="2" fill="#5f8f95" opacity="0.75"/><rect x="58.9" y="14.7" width="4" height="2" fill="#5f8f95" opacity="0.75"/><rect x="55.0" y="40.5" width="4" height="2" fill="#5f8f95" opacity="0.75"/><rect x="65.5" y="19.9" width="4" height="2" fill="#5f8f95" opacity="0.75"/><rect x="71.7" y="42.6" width="4" height="2" fill="#5f8f95" opacity="0.75"/><rect x="36.1" y="11.2" width="4" height="2" fill="#5f8f95" opacity="0.75"/><path d="M65.2 0C65 40 64 80 63 116" stroke="#f3d184" stroke-width="1.4" fill="none"/><path d="M118 0C112 30 104 60 100 80 97 95 98 105 100 116" stroke="#f3d184" stroke-width="1.4" fill="none"/><path d="M70 64C85 60 100 58 110 60 125 64 138 72 153 80" stroke="#f3d184" stroke-width="1.4" fill="none"/><path d="M140 0C136 30 140 70 150 116" stroke="#f3d184" stroke-width="1.4" fill="none"/><path d="M111.4 0C104 6 96 10 93.2 13.5 92 20 98 28 98.2 33.4 98 45 93 55 95 63 97 72 100 82 101.5 89.6 104 98 110 106 111.4 116" stroke="#8db6f0" stroke-width="1.7" fill="none"/><path d="M60.1 80C70 74 95 70 120 76 130 80 140 86 150 90" stroke="#7d8db8" stroke-width="0.7" fill="none"/><rect x="64.0" y="9.0" width="2" height="2" fill="#3fae4a"/><rect x="64.0" y="25.0" width="2" height="2" fill="#3fae4a"/><rect x="63.5" y="45.0" width="2" height="2" fill="#3fae4a"/><rect x="63.5" y="65.0" width="2" height="2" fill="#3fae4a"/><rect x="63.0" y="87.0" width="2" height="2" fill="#3fae4a"/><rect x="63.0" y="107.0" width="2" height="2" fill="#3fae4a"/><rect x="60.4" y="9.5" width="12.0" height="1.3" fill="#8d939b" opacity="0.55"/><rect x="106.5" y="64.5" width="14.0" height="1.3" fill="#8d939b" opacity="0.55"/><rect x="74.9" y="28.7" width="6.9" height="1.3" fill="#8d939b" opacity="0.55"/><rect x="73.1" y="95.2" width="10.9" height="1.3" fill="#8d939b" opacity="0.55"/><rect x="42.6" y="53.1" width="6.4" height="1.3" fill="#8d939b" opacity="0.55"/><rect x="104.0" y="20.7" width="7.4" height="1.3" fill="#8d939b" opacity="0.55"/><rect x="106.1" y="94.9" width="11.0" height="1.3" fill="#8d939b" opacity="0.55"/><rect x="68.1" y="75.1" width="8.2" height="1.3" fill="#8d939b" opacity="0.55"/><rect x="36.8" y="36.5" width="11.5" height="1.3" fill="#8d939b" opacity="0.55"/><rect x="104.3" y="28.0" width="12.7" height="1.3" fill="#8d939b" opacity="0.55"/><rect x="126.6" y="37.1" width="13.7" height="1.3" fill="#8d939b" opacity="0.55"/><rect x="64.7" y="14.7" width="10.1" height="1.3" fill="#8d939b" opacity="0.55"/><rect x="130.3" y="70.4" width="10.4" height="1.3" fill="#8d939b" opacity="0.55"/><rect x="89.2" y="37.6" width="8.4" height="1.3" fill="#8d939b" opacity="0.55"/><rect x="80.0" y="64.9" width="13.5" height="1.3" fill="#8d939b" opacity="0.55"/><rect x="44.0" y="34.2" width="13.5" height="1.3" fill="#8d939b" opacity="0.55"/><rect x="107.7" y="15.7" width="9.5" height="1.3" fill="#8d939b" opacity="0.55"/><rect x="107.0" y="102.8" width="6.7" height="1.3" fill="#8d939b" opacity="0.55"/><rect x="134.4" y="88.2" width="8.2" height="1.3" fill="#8d939b" opacity="0.55"/><rect x="94.2" y="93.8" width="7.9" height="1.3" fill="#8d939b" opacity="0.55"/><rect x="112.5" y="66.2" width="6.6" height="1.3" fill="#8d939b" opacity="0.55"/><rect x="65.7" y="50.9" width="7.1" height="1.3" fill="#8d939b" opacity="0.55"/><rect x="138.9" y="34.0" width="7.9" height="1.3" fill="#8d939b" opacity="0.55"/><rect x="101.1" y="62.9" width="8.6" height="1.3" fill="#8d939b" opacity="0.55"/><path d="M126.3 10.2C130 13 134 16 133 18.5 128 30 124 40 123 46.6 121 60 119 70 119.7 76.3 120 84 122 90 123 94.5" stroke="#4b86e6" stroke-width="1.7" fill="none"/><circle cx="126.3" cy="10.2" r="1.5" fill="#e53935"/><rect x="32.1" y="2.5" width="8" height="6" rx="1" fill="#fff" opacity="0.95"/><rect x="44.1" y="3.5" width="12" height="4" rx="2" fill="#fff" opacity="0.9"/><rect x="58.1" y="3.5" width="12" height="4" rx="2" fill="#fff" opacity="0.9"/><rect x="72.1" y="3.5" width="12" height="4" rx="2" fill="#fff" opacity="0.9"/><rect x="86.1" y="3.5" width="12" height="4" rx="2" fill="#fff" opacity="0.9"/><rect x="0" y="0" width="30.1" height="115.5" fill="#fff"/><rect x="0" y="0" width="30.1" height="55.0" fill="#1a73e8"/><rect x="0" y="47.4" width="30.1" height="7.6" fill="#1766cc"/><rect x="23.1" y="50.4" width="5" height="1.2" fill="#cfe0fb"/><rect x="1" y="9.5" width="20" height="1" fill="#e6efff" opacity="0.75"/><rect x="1" y="15.4" width="24" height="1" fill="#e6efff" opacity="0.75"/><rect x="1" y="21.3" width="20" height="1" fill="#e6efff" opacity="0.75"/><rect x="1" y="27.2" width="24" height="1" fill="#e6efff" opacity="0.75"/><rect x="1" y="33.1" width="20" height="1" fill="#e6efff" opacity="0.75"/><rect x="1" y="39.0" width="24" height="1" fill="#e6efff" opacity="0.75"/><rect x="3" y="3" width="1" height="3" fill="#cfe0fb"/><rect x="24.1" y="3" width="3" height="3" fill="#cfe0fb" opacity="0.6"/><rect x="1" y="61.0" width="8" height="1" fill="#6ea0f0"/><rect x="1" y="69.0" width="10" height="1" fill="#777"/><rect x="19" y="69.0" width="10" height="1" fill="#777"/><rect x="1" y="73.0" width="8" height="0.8" fill="#aaa"/><rect x="1" y="76.0" width="6" height="0.8" fill="#f08a3c"/><rect x="1" y="78.5" width="16" height="0.8" fill="#f08a3c"/><rect x="0" y="88.0" width="30.1" height="0.6" fill="#e6e6e6"/><circle cx="3.2" cy="98.6" r="3" fill="#d93a35"/><circle cx="12.6" cy="98.6" r="3" fill="#f08a2c"/><circle cx="22.8" cy="98.6" r="3" fill="#5f7f96"/><rect x="32.4" y="105" width="11" height="11" fill="#56654a"/><rect x="30.1" y="0" width="0.8" height="115.5" fill="#d8d8d8"/></svg></div>
<svg class="a" style="left:578.2px;top:576.3px" width="16" height="16" viewBox="0 0 16 16"><path d="M2.3 2.3l11.4 11.4M13.7 2.3l-11.4 11.4" stroke="#000" stroke-width="3.4" transform="translate(0.9 1)"/><path d="M1.8 1.8l11.6 11.6M13.4 1.8l-11.6 11.6" stroke="#fff" stroke-width="3.6"/></svg>
<div class="img" style="left:607.2px;top:571px;width:157.8px;height:119.5px"><svg width="153.8" height="115.5" viewBox="0 0 153.8 115.5" style="position:absolute;left:0;top:0;display:block"><rect width="153.8" height="115.5" fill="#e8ebef"/><path d="M30.5 3.3 Q90 4.3 153 -2.5" stroke="#f7f8fa" stroke-width="1.1" fill="none"/><path d="M30.5 23.1 Q90 28.8 153 20.6" stroke="#f7f8fa" stroke-width="1.1" fill="none"/><path d="M30.5 42.8 Q90 44.5 153 47.5" stroke="#f7f8fa" stroke-width="1.1" fill="none"/><path d="M30.5 54.1 Q90 56.9 153 54.3" stroke="#f7f8fa" stroke-width="1.1" fill="none"/><path d="M30.5 74.6 Q90 73.2 153 80.3" stroke="#f7f8fa" stroke-width="1.1" fill="none"/><path d="M30.5 91.9 Q90 94.6 153 94.1" stroke="#f7f8fa" stroke-width="1.1" fill="none"/><path d="M30.5 108.3 Q90 112.0 153 109.7" stroke="#f7f8fa" stroke-width="1.1" fill="none"/><path d="M43.0 0 Q37.3 60 43.7 116" stroke="#f7f8fa" stroke-width="1" fill="none"/><path d="M60.7 0 Q62.1 60 59.9 116" stroke="#f7f8fa" stroke-width="1" fill="none"/><path d="M86.6 0 Q88.0 60 85.0 116" stroke="#f7f8fa" stroke-width="1" fill="none"/><path d="M105.6 0 Q101.2 60 111.4 116" stroke="#f7f8fa" stroke-width="1" fill="none"/><path d="M129.3 0 Q127.7 60 126.0 116" stroke="#f7f8fa" stroke-width="1" fill="none"/><path d="M147.1 0 Q149.3 60 146.4 116" stroke="#f7f8fa" stroke-width="1" fill="none"/><path d="M30.5 0H85C83 8 82 14 81.7 21.8 80 28 77 34 78.4 38.3 80 46 86 52 85 59.8 84 64 76 68 70 70 60 72 45 72 30.5 71.4Z" fill="#b0dbbf"/><rect x="77.3" y="6.3" width="4" height="2" fill="#5f8f95" opacity="0.75"/><rect x="50.0" y="27.8" width="4" height="2" fill="#5f8f95" opacity="0.75"/><rect x="36.6" y="25.4" width="4" height="2" fill="#5f8f95" opacity="0.75"/><rect x="60.5" y="18.0" width="4" height="2" fill="#5f8f95" opacity="0.75"/><rect x="79.7" y="20.1" width="4" height="2" fill="#5f8f95" opacity="0.75"/><rect x="51.2" y="31.4" width="4" height="2" fill="#5f8f95" opacity="0.75"/><rect x="46.5" y="25.7" width="4" height="2" fill="#5f8f95" opacity="0.75"/><rect x="41.6" y="6.6" width="4" height="2" fill="#5f8f95" opacity="0.75"/><path d="M48.2 0C48 40 47 80 46 116" stroke="#f3d184" stroke-width="1.4" fill="none"/><path d="M112 0C108 25 100 50 98 70 97 90 92 105 90 116" stroke="#f3d184" stroke-width="1.4" fill="none"/><path d="M56 80C70 74 90 70 102 66 118 62 134 56 153 52" stroke="#f3d184" stroke-width="1.4" fill="none"/><path d="M150 20C140 50 130 85 124 116" stroke="#f3d184" stroke-width="1.4" fill="none"/><path d="M101.6 0C95 6 90 10 85 13.5 80 16 76 19 76.8 21.8 78 28 85 32 85 38.3 86 50 89 62 88.4 71.4 87 82 81 90 80 96.2 79 104 80 110 81 116" stroke="#8db6f0" stroke-width="1.7" fill="none"/><path d="M60.5 80C70 74 95 70 120 76 130 80 140 86 150 90" stroke="#7d8db8" stroke-width="0.7" fill="none"/><rect x="47.0" y="20.0" width="2" height="2" fill="#3fae4a"/><rect x="47.0" y="41.0" width="2" height="2" fill="#3fae4a"/><rect x="46.8" y="65.0" width="2" height="2" fill="#3fae4a"/><rect x="46.5" y="85.0" width="2" height="2" fill="#3fae4a"/><rect x="46.3" y="103.0" width="2" height="2" fill="#3fae4a"/><rect x="110.8" y="36.9" width="7.3" height="1.3" fill="#8d939b" opacity="0.55"/><rect x="64.5" y="51.3" width="7.2" height="1.3" fill="#8d939b" opacity="0.55"/><rect x="111.9" y="83.1" width="13.8" height="1.3" fill="#8d939b" opacity="0.55"/><rect x="41.1" y="40.8" width="11.4" height="1.3" fill="#8d939b" opacity="0.55"/><rect x="128.2" y="33.7" width="12.9" height="1.3" fill="#8d939b" opacity="0.55"/><rect x="41.1" y="64.9" width="6.2" height="1.3" fill="#8d939b" opacity="0.55"/><rect x="53.7" y="82.4" width="9.6" height="1.3" fill="#8d939b" opacity="0.55"/><rect x="135.3" y="105.6" width="9.6" height="1.3" fill="#8d939b" opacity="0.55"/><rect x="94.3" y="47.4" width="7.3" height="1.3" fill="#8d939b" opacity="0.55"/><rect x="81.9" y="90.9" width="9.3" height="1.3" fill="#8d939b" opacity="0.55"/><rect x="123.8" y="22.1" width="6.9" height="1.3" fill="#8d939b" opacity="0.55"/><rect x="142.9" y="32.2" width="7.1" height="1.3" fill="#8d939b" opacity="0.55"/><rect x="132.6" y="86.5" width="13.0" height="1.3" fill="#8d939b" opacity="0.55"/><rect x="130.3" y="20.6" width="10.6" height="1.3" fill="#8d939b" opacity="0.55"/><rect x="106.3" y="35.6" width="10.8" height="1.3" fill="#8d939b" opacity="0.55"/><rect x="74.9" y="41.2" width="9.2" height="1.3" fill="#8d939b" opacity="0.55"/><rect x="96.6" y="27.1" width="11.9" height="1.3" fill="#8d939b" opacity="0.55"/><rect x="76.5" y="49.3" width="9.3" height="1.3" fill="#8d939b" opacity="0.55"/><rect x="97.9" y="108.2" width="13.1" height="1.3" fill="#8d939b" opacity="0.55"/><rect x="92.8" y="20.7" width="6.6" height="1.3" fill="#8d939b" opacity="0.55"/><rect x="128.5" y="9.0" width="8.2" height="1.3" fill="#8d939b" opacity="0.55"/><rect x="91.7" y="8.6" width="11.1" height="1.3" fill="#8d939b" opacity="0.55"/><rect x="132.9" y="77.0" width="11.6" height="1.3" fill="#8d939b" opacity="0.55"/><rect x="115.6" y="73.8" width="6.1" height="1.3" fill="#8d939b" opacity="0.55"/><path d="M115.6 18.5C118 22 122 26 123 30 119 42 114 52 111.5 59.8 110 70 110 80 109.9 89.6 107 92 104 93 105 92.9 110 90 116 89 121.4 89.6" stroke="#4b86e6" stroke-width="1.7" fill="none"/><circle cx="115.6" cy="18.5" r="1.5" fill="#e53935"/><rect x="32.5" y="2.5" width="8" height="6" rx="1" fill="#fff" opacity="0.95"/><rect x="44.5" y="3.5" width="12" height="4" rx="2" fill="#fff" opacity="0.9"/><rect x="58.5" y="3.5" width="12" height="4" rx="2" fill="#fff" opacity="0.9"/><rect x="72.5" y="3.5" width="12" height="4" rx="2" fill="#fff" opacity="0.9"/><rect x="86.5" y="3.5" width="12" height="4" rx="2" fill="#fff" opacity="0.9"/><rect x="0" y="0" width="30.5" height="115.5" fill="#fff"/><rect x="0" y="0" width="30.5" height="55.0" fill="#1a73e8"/><rect x="0" y="48.2" width="30.5" height="6.8" fill="#1766cc"/><rect x="23.5" y="51.2" width="5" height="1.2" fill="#cfe0fb"/><rect x="1" y="9.5" width="20" height="1" fill="#e6efff" opacity="0.75"/><rect x="1" y="15.5" width="24" height="1" fill="#e6efff" opacity="0.75"/><rect x="1" y="21.6" width="20" height="1" fill="#e6efff" opacity="0.75"/><rect x="1" y="27.6" width="24" height="1" fill="#e6efff" opacity="0.75"/><rect x="1" y="33.6" width="20" height="1" fill="#e6efff" opacity="0.75"/><rect x="1" y="39.7" width="24" height="1" fill="#e6efff" opacity="0.75"/><rect x="3" y="3" width="1" height="3" fill="#cfe0fb"/><rect x="24.5" y="3" width="3" height="3" fill="#cfe0fb" opacity="0.6"/><rect x="1" y="61.0" width="8" height="1" fill="#6ea0f0"/><rect x="1" y="69.0" width="10" height="1" fill="#777"/><rect x="19" y="69.0" width="10" height="1" fill="#777"/><rect x="1" y="73.0" width="8" height="0.8" fill="#aaa"/><rect x="1" y="76.0" width="6" height="0.8" fill="#f08a3c"/><rect x="1" y="78.5" width="16" height="0.8" fill="#f08a3c"/><rect x="0" y="88.0" width="30.5" height="0.6" fill="#e6e6e6"/><circle cx="3.2" cy="98.6" r="3" fill="#d93a35"/><circle cx="12.6" cy="98.6" r="3" fill="#f08a2c"/><circle cx="22.8" cy="98.6" r="3" fill="#5f7f96"/><rect x="32.8" y="105" width="11" height="11" fill="#56654a"/><rect x="30.5" y="0" width="0.8" height="115.5" fill="#d8d8d8"/></svg></div>
<svg class="a" style="left:746.2px;top:576.3px" width="16" height="16" viewBox="0 0 16 16"><path d="M2.3 2.3l11.4 11.4M13.7 2.3l-11.4 11.4" stroke="#000" stroke-width="3.4" transform="translate(0.9 1)"/><path d="M1.8 1.8l11.6 11.6M13.4 1.8l-11.6 11.6" stroke="#fff" stroke-width="3.6"/></svg>
<div class="img" style="left:775.3px;top:571px;width:156.7px;height:119.5px"><svg width="152.7" height="115.5" viewBox="0 0 152.7 115.5" style="position:absolute;left:0;top:0;display:block"><rect width="152.7" height="115.5" fill="#e8ebef"/><path d="M32.3 8.5 Q90 6.0 153 8.0" stroke="#f7f8fa" stroke-width="1.1" fill="none"/><path d="M32.3 20.8 Q90 26.8 153 16.7" stroke="#f7f8fa" stroke-width="1.1" fill="none"/><path d="M32.3 41.0 Q90 42.2 153 43.6" stroke="#f7f8fa" stroke-width="1.1" fill="none"/><path d="M32.3 56.5 Q90 55.0 153 55.3" stroke="#f7f8fa" stroke-width="1.1" fill="none"/><path d="M32.3 71.4 Q90 69.3 153 68.7" stroke="#f7f8fa" stroke-width="1.1" fill="none"/><path d="M32.3 92.7 Q90 92.0 153 87.8" stroke="#f7f8fa" stroke-width="1.1" fill="none"/><path d="M32.3 105.2 Q90 103.3 153 111.0" stroke="#f7f8fa" stroke-width="1.1" fill="none"/><path d="M40.5 0 Q39.7 60 43.7 116" stroke="#f7f8fa" stroke-width="1" fill="none"/><path d="M62.3 0 Q67.1 60 66.9 116" stroke="#f7f8fa" stroke-width="1" fill="none"/><path d="M88.9 0 Q83.1 60 94.1 116" stroke="#f7f8fa" stroke-width="1" fill="none"/><path d="M105.1 0 Q109.9 60 108.7 116" stroke="#f7f8fa" stroke-width="1" fill="none"/><path d="M128.5 0 Q132.5 60 131.8 116" stroke="#f7f8fa" stroke-width="1" fill="none"/><path d="M151.7 0 Q148.7 60 157.3 116" stroke="#f7f8fa" stroke-width="1" fill="none"/><path d="M32 0H108.3C110 6 111 12 110.9 18.2 106 28 100 36 97.8 44.4 95 52 93 60 92.5 65.4 86 70 70 71 60 70.6 46 70 38 71 32 70.6Z" fill="#b0dbbf"/><rect x="63.5" y="20.4" width="4" height="2" fill="#5f8f95" opacity="0.75"/><rect x="41.6" y="42.6" width="4" height="2" fill="#5f8f95" opacity="0.75"/><rect x="79.3" y="44.1" width="4" height="2" fill="#5f8f95" opacity="0.75"/><rect x="65.1" y="37.5" width="4" height="2" fill="#5f8f95" opacity="0.75"/><rect x="53.5" y="10.9" width="4" height="2" fill="#5f8f95" opacity="0.75"/><rect x="76.8" y="39.6" width="4" height="2" fill="#5f8f95" opacity="0.75"/><rect x="60.2" y="44.2" width="4" height="2" fill="#5f8f95" opacity="0.75"/><rect x="42.9" y="8.6" width="4" height="2" fill="#5f8f95" opacity="0.75"/><path d="M86.5 0C86 40 85.5 80 85 116" stroke="#f3d184" stroke-width="1.4" fill="none"/><path d="M142 0C136 30 128 70 124 116" stroke="#f3d184" stroke-width="1.4" fill="none"/><path d="M32 72C60 74 80 70 108 66 124 66 138 70 153 76" stroke="#f3d184" stroke-width="1.4" fill="none"/><path d="M119.8 0C112 8 105 18 101.4 26 100 34 106 38 106.7 44.4 106 58 99 68 98 76 99 86 102 96 103 102 104 108 106 112 107 116" stroke="#8db6f0" stroke-width="1.7" fill="none"/><path d="M62.3 80C70 74 95 70 120 76 130 80 140 86 150 90" stroke="#7d8db8" stroke-width="0.7" fill="none"/><rect x="85.0" y="19.0" width="2" height="2" fill="#3fae4a"/><rect x="85.0" y="37.0" width="2" height="2" fill="#3fae4a"/><rect x="84.8" y="55.0" width="2" height="2" fill="#3fae4a"/><rect x="84.5" y="79.0" width="2" height="2" fill="#3fae4a"/><rect x="84.2" y="99.0" width="2" height="2" fill="#3fae4a"/><rect x="67.4" y="101.4" width="8.9" height="1.3" fill="#8d939b" opacity="0.55"/><rect x="48.1" y="26.9" width="6.9" height="1.3" fill="#8d939b" opacity="0.55"/><rect x="134.0" y="109.3" width="6.5" height="1.3" fill="#8d939b" opacity="0.55"/><rect x="109.5" y="30.6" width="12.8" height="1.3" fill="#8d939b" opacity="0.55"/><rect x="66.0" y="85.9" width="6.4" height="1.3" fill="#8d939b" opacity="0.55"/><rect x="99.4" y="52.3" width="7.0" height="1.3" fill="#8d939b" opacity="0.55"/><rect x="136.6" y="56.6" width="11.9" height="1.3" fill="#8d939b" opacity="0.55"/><rect x="58.4" y="41.0" width="13.0" height="1.3" fill="#8d939b" opacity="0.55"/><rect x="93.7" y="108.5" width="11.5" height="1.3" fill="#8d939b" opacity="0.55"/><rect x="143.1" y="44.0" width="10.2" height="1.3" fill="#8d939b" opacity="0.55"/><rect x="135.0" y="13.0" width="10.3" height="1.3" fill="#8d939b" opacity="0.55"/><rect x="40.1" y="32.7" width="9.4" height="1.3" fill="#8d939b" opacity="0.55"/><rect x="64.9" y="15.6" width="6.6" height="1.3" fill="#8d939b" opacity="0.55"/><rect x="109.6" y="98.4" width="10.8" height="1.3" fill="#8d939b" opacity="0.55"/><rect x="74.4" y="83.9" width="6.2" height="1.3" fill="#8d939b" opacity="0.55"/><rect x="120.7" y="66.8" width="10.0" height="1.3" fill="#8d939b" opacity="0.55"/><rect x="101.8" y="21.5" width="9.8" height="1.3" fill="#8d939b" opacity="0.55"/><rect x="95.6" y="54.7" width="10.1" height="1.3" fill="#8d939b" opacity="0.55"/><rect x="78.9" y="71.2" width="8.9" height="1.3" fill="#8d939b" opacity="0.55"/><rect x="138.8" y="34.8" width="12.2" height="1.3" fill="#8d939b" opacity="0.55"/><rect x="96.5" y="99.0" width="12.2" height="1.3" fill="#8d939b" opacity="0.55"/><rect x="88.2" y="111.5" width="12.6" height="1.3" fill="#8d939b" opacity="0.55"/><rect x="55.4" y="40.1" width="7.9" height="1.3" fill="#8d939b" opacity="0.55"/><rect x="87.0" y="62.5" width="10.0" height="1.3" fill="#8d939b" opacity="0.55"/><path d="M134.5 19.5C138 21 141 24 142.3 26 139 38 136 48 134.5 57.5 131 70 128 84 126.6 94.2" stroke="#4b86e6" stroke-width="1.7" fill="none"/><circle cx="134.5" cy="19.5" r="1.5" fill="#e53935"/><rect x="34.3" y="2.5" width="8" height="6" rx="1" fill="#fff" opacity="0.95"/><rect x="46.3" y="3.5" width="12" height="4" rx="2" fill="#fff" opacity="0.9"/><rect x="60.3" y="3.5" width="12" height="4" rx="2" fill="#fff" opacity="0.9"/><rect x="74.3" y="3.5" width="12" height="4" rx="2" fill="#fff" opacity="0.9"/><rect x="88.3" y="3.5" width="12" height="4" rx="2" fill="#fff" opacity="0.9"/><rect x="0" y="0" width="32.3" height="115.5" fill="#fff"/><rect x="0" y="0" width="32.3" height="49.7" fill="#1a73e8"/><rect x="0" y="41.8" width="32.3" height="7.9" fill="#1766cc"/><rect x="25.3" y="44.8" width="5" height="1.2" fill="#cfe0fb"/><rect x="1" y="9.5" width="20" height="1" fill="#e6efff" opacity="0.75"/><rect x="1" y="14.5" width="24" height="1" fill="#e6efff" opacity="0.75"/><rect x="1" y="19.4" width="20" height="1" fill="#e6efff" opacity="0.75"/><rect x="1" y="24.4" width="24" height="1" fill="#e6efff" opacity="0.75"/><rect x="1" y="29.4" width="20" height="1" fill="#e6efff" opacity="0.75"/><rect x="1" y="34.3" width="24" height="1" fill="#e6efff" opacity="0.75"/><rect x="3" y="3" width="1" height="3" fill="#cfe0fb"/><rect x="26.3" y="3" width="3" height="3" fill="#cfe0fb" opacity="0.6"/><rect x="1" y="55.7" width="8" height="1" fill="#6ea0f0"/><rect x="1" y="63.7" width="10" height="1" fill="#777"/><rect x="19" y="63.7" width="10" height="1" fill="#777"/><rect x="1" y="67.7" width="8" height="0.8" fill="#aaa"/><rect x="1" y="70.7" width="6" height="0.8" fill="#f08a3c"/><rect x="1" y="73.2" width="16" height="0.8" fill="#f08a3c"/><rect x="0" y="82.7" width="32.3" height="0.6" fill="#e6e6e6"/><circle cx="3.2" cy="92.0" r="3" fill="#d93a35"/><circle cx="12.6" cy="92.0" r="3" fill="#f08a2c"/><circle cx="22.8" cy="92.0" r="3" fill="#5f7f96"/><rect x="34.6" y="105" width="11" height="11" fill="#56654a"/><rect x="32.3" y="0" width="0.8" height="115.5" fill="#d8d8d8"/></svg></div>
<svg class="a" style="left:913.2px;top:576.3px" width="16" height="16" viewBox="0 0 16 16"><path d="M2.3 2.3l11.4 11.4M13.7 2.3l-11.4 11.4" stroke="#000" stroke-width="3.4" transform="translate(0.9 1)"/><path d="M1.8 1.8l11.6 11.6M13.4 1.8l-11.6 11.6" stroke="#fff" stroke-width="3.6"/></svg>
<div class="img" style="left:942.2px;top:571px;width:157.8px;height:119.5px"><svg width="153.8" height="115.5" viewBox="0 0 153.8 115.5" style="position:absolute;left:0;top:0;display:block"><rect width="153.8" height="115.5" fill="#e8ebef"/><path d="M26.4 6.0 Q90 10.3 153 1.0" stroke="#f7f8fa" stroke-width="1.1" fill="none"/><path d="M26.4 21.3 Q90 15.9 153 23.1" stroke="#f7f8fa" stroke-width="1.1" fill="none"/><path d="M26.4 36.1 Q90 33.8 153 40.0" stroke="#f7f8fa" stroke-width="1.1" fill="none"/><path d="M26.4 51.3 Q90 47.2 153 48.9" stroke="#f7f8fa" stroke-width="1.1" fill="none"/><path d="M26.4 71.9 Q90 71.6 153 73.4" stroke="#f7f8fa" stroke-width="1.1" fill="none"/><path d="M26.4 88.4 Q90 85.2 153 87.8" stroke="#f7f8fa" stroke-width="1.1" fill="none"/><path d="M26.4 100.0 Q90 103.4 153 94.2" stroke="#f7f8fa" stroke-width="1.1" fill="none"/><path d="M40.5 0 Q38.0 60 41.3 116" stroke="#f7f8fa" stroke-width="1" fill="none"/><path d="M56.9 0 Q63.8 60 54.7 116" stroke="#f7f8fa" stroke-width="1" fill="none"/><path d="M80.0 0 Q87.1 60 81.2 116" stroke="#f7f8fa" stroke-width="1" fill="none"/><path d="M100.0 0 Q95.7 60 104.9 116" stroke="#f7f8fa" stroke-width="1" fill="none"/><path d="M124.1 0 Q126.2 60 124.8 116" stroke="#f7f8fa" stroke-width="1" fill="none"/><path d="M146.8 0 Q140.8 60 145.2 116" stroke="#f7f8fa" stroke-width="1" fill="none"/><path d="M26.4 10C32 20 38 40 38.8 60 38 80 36 100 38 116H26.4Z" fill="#b7dbc3"/><path d="M104.9 3.6C98 40 86 80 80 112.7" stroke="#f3d184" stroke-width="1.6" fill="none"/><path d="M149.5 13.5C136 40 120 80 110 116" stroke="#f3d184" stroke-width="1.5" fill="none"/><path d="M154.5 46C146 70 136 95 128 116" stroke="#f3d184" stroke-width="1.1" fill="none"/><path d="M81.8 0C82 6 80 10 80 13.5 70 16 60 17 53.7 20 46 28 44 36 43.7 43.3 40 52 34 58 33.8 66.4 34 80 40 96 45.4 116" stroke="#7eaef0" stroke-width="2" fill="none"/><path d="M26.4 38C34 42 40 44 43 45 38 50 30 53 26.4 54" stroke="#7eaef0" stroke-width="1.6" fill="none"/><path d="M27.2 78C40 80 52 84 60.3 88 63 96 62 106 62 116" stroke="#b07ab8" stroke-width="0.8" fill="none"/><rect x="123.9" y="76.3" width="11.0" height="1.3" fill="#8d939b" opacity="0.55"/><rect x="106.4" y="57.1" width="10.5" height="1.3" fill="#8d939b" opacity="0.55"/><rect x="80.7" y="106.6" width="8.2" height="1.3" fill="#8d939b" opacity="0.55"/><rect x="61.3" y="40.7" width="7.3" height="1.3" fill="#8d939b" opacity="0.55"/><rect x="101.7" y="68.1" width="6.5" height="1.3" fill="#8d939b" opacity="0.55"/><rect x="60.7" y="99.9" width="8.2" height="1.3" fill="#8d939b" opacity="0.55"/><rect x="107.9" y="51.0" width="7.3" height="1.3" fill="#8d939b" opacity="0.55"/><rect x="141.8" y="73.9" width="8.0" height="1.3" fill="#8d939b" opacity="0.55"/><rect x="97.6" y="38.9" width="12.3" height="1.3" fill="#8d939b" opacity="0.55"/><rect x="34.8" y="53.2" width="11.1" height="1.3" fill="#8d939b" opacity="0.55"/><rect x="115.2" y="18.8" width="6.4" height="1.3" fill="#8d939b" opacity="0.55"/><rect x="83.6" y="69.4" width="9.7" height="1.3" fill="#8d939b" opacity="0.55"/><rect x="39.1" y="35.8" width="11.6" height="1.3" fill="#8d939b" opacity="0.55"/><rect x="91.2" y="106.2" width="6.4" height="1.3" fill="#8d939b" opacity="0.55"/><rect x="101.8" y="69.2" width="9.6" height="1.3" fill="#8d939b" opacity="0.55"/><rect x="39.7" y="47.3" width="8.5" height="1.3" fill="#8d939b" opacity="0.55"/><rect x="51.0" y="94.9" width="6.7" height="1.3" fill="#8d939b" opacity="0.55"/><rect x="36.6" y="101.7" width="13.6" height="1.3" fill="#8d939b" opacity="0.55"/><rect x="105.2" y="60.8" width="11.7" height="1.3" fill="#8d939b" opacity="0.55"/><rect x="38.5" y="34.6" width="9.9" height="1.3" fill="#8d939b" opacity="0.55"/><rect x="45.4" y="100.1" width="10.7" height="1.3" fill="#8d939b" opacity="0.55"/><rect x="58.9" y="71.1" width="12.7" height="1.3" fill="#8d939b" opacity="0.55"/><path d="M103.2 25.9H106.5L105.7 43.3 118 46.6 123 54.9 118 66.4M95.8 58.2L103.2 25.9M95.8 58.2L152.8 88.7" stroke="#4b86e6" stroke-width="1.7" fill="none"/><circle cx="106.5" cy="35.8" r="1.4" fill="#e53935"/><path d="M140 78C136 84 134 90 138 92 142 88 144 82 140 78z" fill="#a8d5b5"/><rect x="106.0" y="3.5" width="12" height="4" rx="2" fill="#fff" opacity="0.9"/><rect x="119.0" y="3.5" width="12" height="4" rx="2" fill="#fff" opacity="0.9"/><rect x="132.0" y="3.5" width="12" height="4" rx="2" fill="#fff" opacity="0.9"/><rect x="145.0" y="3.5" width="12" height="4" rx="2" fill="#fff" opacity="0.9"/><rect x="0" y="0" width="26.4" height="115.5" fill="#fff"/><rect x="0" y="0" width="26.4" height="10.5" fill="#1a73e8"/><rect x="1" y="3" width="20" height="0.9" fill="#dfeaff"/><rect x="1" y="6" width="22" height="0.9" fill="#dfeaff"/><rect x="1" y="19" width="16" height="0.9" fill="#888" opacity="0.6"/><rect x="1" y="37" width="20" height="0.9" fill="#888" opacity="0.6"/><rect x="1" y="45" width="16" height="0.9" fill="#888" opacity="0.6"/><rect x="1" y="56" width="20" height="0.9" fill="#888" opacity="0.6"/><rect x="1" y="64" width="16" height="0.9" fill="#888" opacity="0.6"/><rect x="1" y="74" width="20" height="0.9" fill="#888" opacity="0.6"/><rect x="1" y="85" width="16" height="0.9" fill="#888" opacity="0.6"/><rect x="1" y="93" width="20" height="0.9" fill="#888" opacity="0.6"/><rect x="1" y="100" width="16" height="0.9" fill="#888" opacity="0.6"/><rect x="1" y="110" width="20" height="0.9" fill="#888" opacity="0.6"/><rect x="24.9" y="28" width="1.2" height="60" fill="#bdbdbd"/><rect x="29.4" y="106" width="10" height="10" fill="#56654a"/></svg></div>
<svg class="a" style="left:1081.2px;top:576.3px" width="16" height="16" viewBox="0 0 16 16"><path d="M2.3 2.3l11.4 11.4M13.7 2.3l-11.4 11.4" stroke="#000" stroke-width="3.4" transform="translate(0.9 1)"/><path d="M1.8 1.8l11.6 11.6M13.4 1.8l-11.6 11.6" stroke="#fff" stroke-width="3.6"/></svg>

</body></html>
